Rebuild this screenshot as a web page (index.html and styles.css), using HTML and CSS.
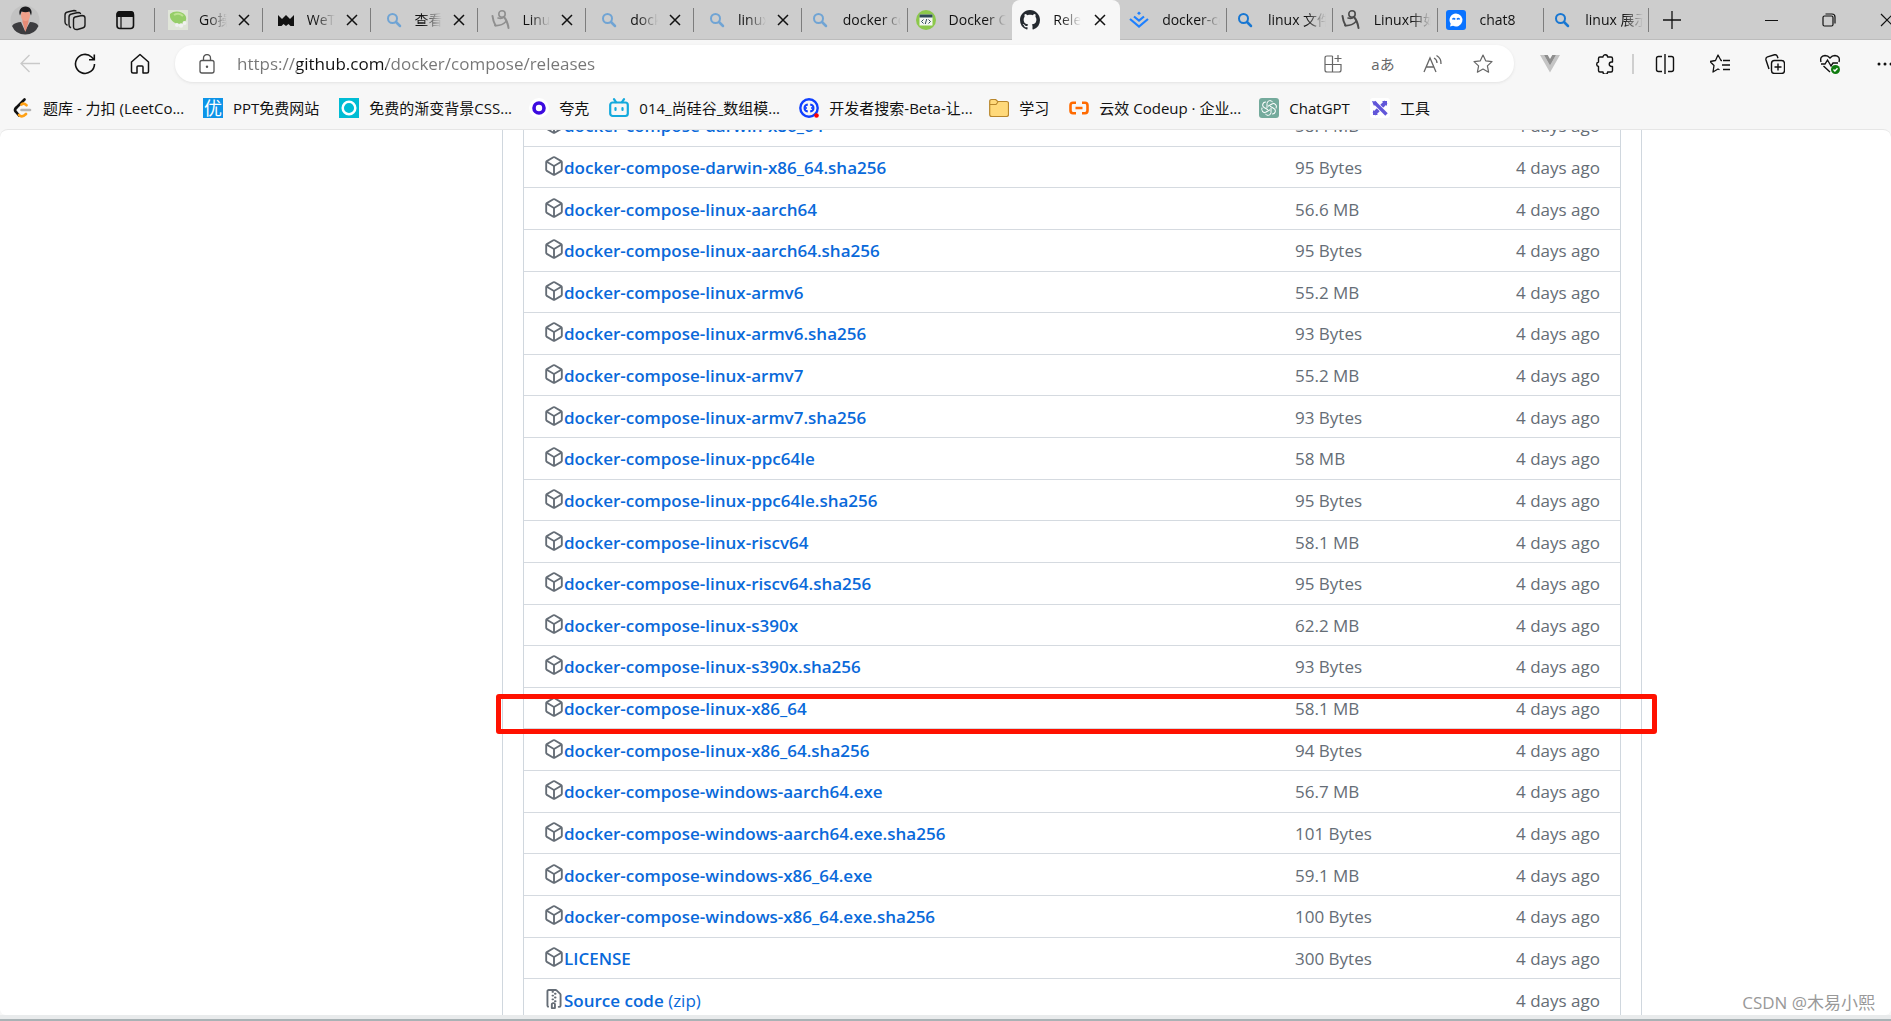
FILE: index.html
```html
<!DOCTYPE html>
<html lang="zh-CN">
<head>
<meta charset="utf-8">
<title>Releases · docker/compose</title>
<link rel="stylesheet" href="styles.css">
</head>
<body>
<svg class="defs" aria-hidden="true">
  <symbol id="package" viewBox="0 0 16 16"><path d="M8.878.392l5.25 3.045c.54.314.872.89.872 1.514v6.098a1.75 1.75 0 0 1-.872 1.514l-5.25 3.045a1.75 1.75 0 0 1-1.756 0l-5.25-3.045A1.75 1.75 0 0 1 1 11.049V4.951c0-.624.332-1.201.872-1.514L7.122.392a1.75 1.75 0 0 1 1.756 0ZM7.875 1.69l-4.63 2.685L8 7.133l4.755-2.758-4.63-2.685a.248.248 0 0 0-.25 0ZM2.5 5.677v5.372c0 .09.047.171.125.216l4.625 2.683V8.432Zm6.25 8.271 4.625-2.683a.25.25 0 0 0 .125-.216V5.677L8.75 8.432Z"/></symbol>
  <symbol id="zip" viewBox="0 0 16 16"><path d="M3.5 1.75v11.5c0 .09.048.173.126.217a.75.75 0 0 1-.752 1.298A1.748 1.748 0 0 1 2 13.25V1.75C2 .784 2.784 0 3.75 0h5.586c.464 0 .909.185 1.237.513l2.914 2.914c.329.328.513.773.513 1.237v8.586A1.75 1.75 0 0 1 12.25 15h-.5a.75.75 0 0 1 0-1.5h.5a.25.25 0 0 0 .25-.25V4.664a.25.25 0 0 0-.073-.177L9.513 1.573a.25.25 0 0 0-.177-.073H7.25a.75.75 0 0 1 0 1.5h-.5a.75.75 0 0 1 0-1.5h-3a.25.25 0 0 0-.25.25Zm3.75 8.75h.5c.966 0 1.75.784 1.75 1.75v3a.75.75 0 0 1-.75.75h-2.5a.75.75 0 0 1-.75-.75v-3c0-.966.784-1.75 1.75-1.75ZM6 5.25a.75.75 0 0 1 .75-.75h.5a.75.75 0 0 1 0 1.5h-.5A.75.75 0 0 1 6 5.25Zm.75 2.25h.5a.75.75 0 0 1 0 1.5h-.5a.75.75 0 0 1 0-1.5ZM8 6.75A.75.75 0 0 1 8.75 6h.5a.75.75 0 0 1 0 1.5h-.5A.75.75 0 0 1 8 6.75ZM8.75 3h.5a.75.75 0 0 1 0 1.5h-.5a.75.75 0 0 1 0-1.5ZM8 9.75A.75.75 0 0 1 8.75 9h.5a.75.75 0 0 1 0 1.5h-.5A.75.75 0 0 1 8 9.75Zm-1 2.5v2.25h1v-2.25a.25.25 0 0 0-.25-.25h-.5a.25.25 0 0 0-.25.25Z"/></symbol>
  <symbol id="close" viewBox="0 0 12 12"><path d="M1 1l10 10M11 1L1 11" fill="none" stroke="#111" stroke-width="1.5"/></symbol>
  <symbol id="search" viewBox="0 0 20 20"><circle cx="8.500" cy="8.500" r="4.500" fill="none" stroke="currentColor" stroke-width="2"/><path d="M12 12l4 4" stroke="currentColor" stroke-width="2.500" stroke-linecap="round"/></symbol>
  <symbol id="scribble" viewBox="0 0 20 20"><g fill="none" stroke="currentColor" stroke-linecap="round"><circle cx="11" cy="4" r="3.200" stroke-width="1.600"/><path d="M1.500 6c.5 4 1.500 7 3 9.500M13 7c2.500 3 4 7 4.500 11" stroke-width="2"/><path d="M4 15.500c5 .5 9-2 11-4M7 8q4 1 6-1" stroke-width="1.600"/></g></symbol>
</svg>

<header class="browser">
  <div class="tabstrip">
    <div class="tab-tools">
      <button class="tool" aria-label="Profile"><svg class="avatar" viewBox="0 0 30 30"><circle cx="15" cy="15" r="14.500" fill="#c2c2c2"/><path d="M2 21c2-3 6-4 9-4l4 9 5-9c4 0 7 1 8.500 4a14.500 14.500 0 0 1-26.500 0z" fill="#3c3c3f"/><path d="M12.500 14h6v3l-3 10-3-10z" fill="#e58a75"/><ellipse cx="15.500" cy="10.500" rx="4.500" ry="5.500" fill="#f0a08a"/><path d="M10 10.500c-2-5 1-9 5.500-9s7.500 4 5.500 9l-1.500-4c-3 1-5 1-8 0z" fill="#1c1c1f"/></svg></button>
      <button class="tool" aria-label="Workspaces"><svg class="icon22" viewBox="0 0 22 22" fill="none" stroke="#1a1a1a" stroke-width="1.400" stroke-linecap="round"><path d="M11 8l7-1.500q3 0 3 2.500v7q0 2.500-2.500 3l-5 1.500q-4 .5-4-3v-7q0-2 1.500-2.500z"/><path d="M6.500 18.500Q5 18 5 15.500V8q0-2.500 2.500-3l6.500-1.500q2 0 2.500 1M3 16q-2-.5-2-3V6q0-2.500 2.500-3L10 1.500q1.500 0 2 .5"/></svg></button>
      <button class="tool" aria-label="Tab actions"><svg class="icon20" viewBox="0 0 20 20"><rect x="2" y="2" width="16.500" height="16.500" rx="3" fill="none" stroke="#111" stroke-width="1.600"/><path d="M1.500 7V4q0-3 3-3h11.500q3 0 3 3v3z" fill="#111"/><path d="M6 7v11" stroke="#111" stroke-width="1.200"/></svg></button>
    </div>
    <div class="tabs" role="tablist">
      <div class="tab closable" role="tab"><svg class="icon20 faded" viewBox="0 0 20 20"><rect width="20" height="20" fill="#e9f0df"/><path d="M2 4c4-4 12-3 15 1 3 4 0 9-4 9-6 1-12-4-11-10z" fill="#7fcf3e"/><path d="M6 5q5-3 9 1" stroke="#b9ec7a" stroke-width="2" fill="none"/><circle cx="9" cy="15" r="2" fill="#fff"/><circle cx="13" cy="15.500" r="2.200" fill="#fff"/><circle cx="16.500" cy="13" r="2" fill="#fff"/></svg><span class="title">Go操作</span><button class="close" aria-label="Close"><svg class="icon12"><use href="#close"/></svg></button></div>
      <div class="tab closable" role="tab"><svg class="icon20" viewBox="0 0 20 20"><path d="M2 5l4 4 4-4 4 4 4-4v11H14.500L12.500 14 10 16 7.500 14 5.500 16H2z" fill="#111"/></svg><span class="title">WeTab</span><button class="close" aria-label="Close"><svg class="icon12"><use href="#close"/></svg></button></div>
      <div class="tab closable" role="tab"><svg class="icon20 bing-faded"><use href="#search"/></svg><span class="title">查看端口</span><button class="close" aria-label="Close"><svg class="icon12"><use href="#close"/></svg></button></div>
      <div class="tab closable" role="tab"><svg class="icon20 ink-faded"><use href="#scribble"/></svg><span class="title">Linux</span><button class="close" aria-label="Close"><svg class="icon12"><use href="#close"/></svg></button></div>
      <div class="tab closable" role="tab"><svg class="icon20 bing-faded"><use href="#search"/></svg><span class="title">docker</span><button class="close" aria-label="Close"><svg class="icon12"><use href="#close"/></svg></button></div>
      <div class="tab closable" role="tab"><svg class="icon20 bing-faded"><use href="#search"/></svg><span class="title">linux 命令</span><button class="close" aria-label="Close"><svg class="icon12"><use href="#close"/></svg></button></div>
      <div class="tab" role="tab"><svg class="icon20 bing-faded"><use href="#search"/></svg><span class="title">docker co</span></div>
      <div class="tab" role="tab"><svg class="icon20" viewBox="0 0 20 20"><circle cx="10" cy="10" r="10" fill="#8cc84b"/><rect x="3.500" y="4.500" width="13" height="11" fill="#f4f6f2"/><path d="M3.500 4.500h13v3h-13z" fill="#2f4a58"/><path d="M7.500 9.500l-2 2 2 2M12.500 9.500l2 2-2 2M10.700 9l-1.400 5" fill="none" stroke="#2f4a58"/></svg><span class="title">Docker C</span></div>
      <div class="tab active" role="tab" aria-selected="true"><svg class="icon20" viewBox="0 0 16 16"><path fill="#24292f" d="M8 0c4.420 0 8 3.580 8 8a8.013 8.013 0 0 1-5.450 7.590c-.4.080-.55-.17-.55-.38 0-.27.010-1.130.010-2.200 0-.75-.25-1.230-.54-1.480 1.780-.2 3.650-.88 3.650-3.950 0-.88-.31-1.590-.82-2.150.080-.2.360-1.020-.080-2.120 0 0-.67-.22-2.200.820-.64-.18-1.320-.27-2-.27-.68 0-1.360.090-2 .27-1.530-1.030-2.200-.82-2.200-.82-.44 1.100-.16 1.920-.080 2.120-.51.560-.82 1.280-.82 2.150 0 3.060 1.860 3.750 3.640 3.950-.23.200-.44.550-.51 1.070-.46.210-1.610.550-2.330-.66-.15-.24-.6-.83-1.230-.82-.67.010-.27.380.010.530.340.190.730.900.820 1.130.160.450.680 1.310 2.690.940 0 .670.010 1.300.010 1.490 0 .210-.15.450-.55.380A7.995 7.995 0 0 1 0 8c0-4.420 3.580-8 8-8Z"/></svg><span class="title">Releases</span><button class="close" aria-label="Close"><svg class="icon12"><use href="#close"/></svg></button></div>
      <div class="tab" role="tab"><svg class="icon20" viewBox="0 0 20 20" fill="none" stroke="#1e80ff" stroke-width="2.200"><path d="M10 1.500l2 1.700-2 1.700-2-1.700z" fill="#1e80ff" stroke="none"/><path d="M5 6.500l5 4 5-4M1 9l9 7.500L19 9"/></svg><span class="title">docker-co</span></div>
      <div class="tab" role="tab"><svg class="icon20 bing"><use href="#search"/></svg><span class="title">linux 文件</span></div>
      <div class="tab" role="tab"><svg class="icon20 ink"><use href="#scribble"/></svg><span class="title">Linux中如</span></div>
      <div class="tab" role="tab"><svg class="icon20" viewBox="0 0 20 20"><rect width="20" height="20" rx="3" fill="#0a73ff"/><path d="M10 3.500a6.500 6.500 0 1 1-3 12.300L4 16.500l.700-2.800A6.500 6.500 0 0 1 10 3.500z" fill="#fff"/><path d="M6.500 9.500q1.300-2 2.600 0M11 9.500q1.300-2 2.600 0" stroke="#0a73ff" stroke-width="1.500" fill="none"/></svg><span class="title">chat8</span></div>
      <div class="tab" role="tab"><svg class="icon20 bing"><use href="#search"/></svg><span class="title">linux 展示</span></div>
    </div>
    <button class="newtab" aria-label="New tab"><svg class="icon20" viewBox="0 0 20 20" stroke="#111" stroke-width="1.300"><path d="M10 1v18M1 10h18"/></svg></button>
    <div class="window-controls">
      <button class="win" aria-label="Minimize"><svg class="icon14" viewBox="0 0 14 14" stroke="#111"><path d="M1 7.500h13"/></svg></button>
      <button class="win" aria-label="Restore"><svg class="icon14" viewBox="0 0 14 14" fill="none" stroke="#111" stroke-width="1.200"><rect x="1" y="3" width="10" height="10" rx="1.500"/><path d="M3.500 1h6.500q3 0 3 3v6.500"/></svg></button>
      <button class="win" aria-label="Close window"><svg class="icon14" viewBox="0 0 14 14" stroke="#111" stroke-width="1.200"><path d="M1 1l12 12M13 1L1 13"/></svg></button>
    </div>
  </div>

  <div class="toolbar">
    <button class="nav" aria-label="Back"><svg class="icon20" viewBox="0 0 20 20" fill="none" stroke="#c9c9c9" stroke-width="1.300"><path d="M20 9.500H1M9.500 1L1 9.500l8.500 8.500"/></svg></button>
    <button class="nav" aria-label="Refresh"><svg class="icon22" viewBox="0 0 22 22" fill="none" stroke="#111" stroke-width="1.600"><path d="M20.500 11a9.500 9.500 0 1 1-3-7l2.500 2.500M20.300 1.500v5.300h-5.300"/></svg></button>
    <button class="nav" aria-label="Home"><svg class="icon22" viewBox="0 0 22 22" fill="none" stroke="#111" stroke-width="1.500" stroke-linejoin="round"><path d="M2.500 9L11 1.500 19.500 9v9.500q0 1.500-1.500 1.500h-4v-6q0-1-1-1H9q-1 0-1 1v6H4q-1.500 0-1.500-1.500z"/></svg></button>
    <div class="address">
      <svg class="icon20" viewBox="0 0 20 20" fill="none" stroke="#555" stroke-width="1.300"><rect x="3" y="6.500" width="14" height="12.500" rx="2"/><path d="M6.500 6.500V4a3.500 3.500 0 0 1 7 0v2.500"/><circle cx="10" cy="12.800" r="1.200" fill="#555" stroke="none"/></svg>
      <input class="url" type="text" aria-label="Address" value="https://github.com/docker/compose/releases">
      <button class="page-action" aria-label="App available"><svg class="icon20" viewBox="0 0 20 20" fill="none" stroke="#666" stroke-width="1.200"><path d="M9.500 2H4Q2 2 2 4v12q0 2 2 2h12q2 0 2-2v-5.500H2M9.500 2v16M15 1v7M11.500 4.500h7"/></svg></button>
      <button class="page-action translate" aria-label="Translate">aあ</button>
      <button class="page-action" aria-label="Read aloud"><svg class="icon20" viewBox="0 0 20 20" fill="none" stroke="#666" stroke-width="1.300"><path d="M1 18L7 4l6 14M3 13h8M11 4q3 1.500 3 5M13.500 1.500q5 3 4.500 8.500"/></svg></button>
      <button class="page-action" aria-label="Favorite"><svg class="icon20" viewBox="0 0 20 20" fill="none" stroke="#666" stroke-width="1.200" stroke-linejoin="round"><path d="M10 1l2.700 5.800 6.300.8-4.600 4.300 1.200 6.300L10 15.100l-5.600 3.100 1.200-6.300L1 7.600l6.300-.8z"/></svg></button>
    </div>
    <div class="extensions">
      <button class="nav" aria-label="Vue devtools"><svg class="icon20" viewBox="0 0 20 20"><path d="M0 1h4l6 10.500L16 1h4L10 18.500z" fill="#c4c4c4"/><path d="M4 1h3.700L10 5l2.300-4H16l-6 10.500z" fill="#8e8e8e"/></svg></button>
      <button class="nav" aria-label="Extensions"><svg class="icon20" viewBox="0 0 20 20" fill="none" stroke="#111" stroke-width="1.400" stroke-linejoin="round"><path d="M5 3h3a2.300 2.300 0 0 1 4.600 0H16q1.500 0 1.500 1.500V8h-1a2.200 2.200 0 0 0 0 4.500h1v4q0 1.500-1.500 1.500h-3.400a2.300 2.300 0 0 1-4.600 0H5q-1.500 0-1.500-1.500v-4a2.300 2.300 0 0 1 0-4.500V4.500Q3.500 3 5 3z"/></svg></button>
    </div>
    <button class="nav" aria-label="Split screen"><svg class="icon20" viewBox="0 0 20 20" fill="none" stroke="#111" stroke-width="1.400"><path d="M7 2.500H3.500q-2 0-2 2v11q0 2 2 2H7M13 2.500h3.500q2 0 2 2v11q0 2-2 2H13M10 0v20"/></svg></button>
    <button class="nav" aria-label="Favorites"><svg class="icon20" viewBox="0 0 20 20" fill="none" stroke="#111" stroke-width="1.300" stroke-linejoin="round"><path d="M12 6.500h-1L8 1 5.500 6.500 0 7.500l4 4-1 6.500 5-3 1.500.8M13 6.500h7M12 11h8M13 15.500h7"/></svg></button>
    <button class="nav" aria-label="Collections"><svg class="icon20" viewBox="0 0 20 20" fill="none" stroke="#111" stroke-width="1.400"><rect x="6.500" y="6.500" width="13" height="13" rx="3"/><path d="M13 9.500v7M9.500 13h7M4 15L1 6Q.500 3.500 2.500 2.800l7-2q2-.5 2.800 1.500l.7 2"/></svg></button>
    <button class="nav" aria-label="Browser essentials"><svg class="icon20" viewBox="0 0 20 20" fill="none" stroke="#111" stroke-width="1.400"><path d="M1 8Q-.500 2 5 1.500q3 0 5 2.500 2-2.500 5-2.500Q20.500 2 19 8M1 10h4l2.500-4 3.500 6 2-3h5M3.500 12l6.500 6"/><circle cx="15.500" cy="15.500" r="4.500" fill="#107c10" stroke="none"/><path d="M13.500 15.500l1.400 1.400 2.600-2.700" stroke="#fff"/></svg></button>
    <button class="nav" aria-label="More"><svg class="icon20" viewBox="0 0 20 20" fill="#111"><circle cx="4" cy="10" r="1.500"/><circle cx="10" cy="10" r="1.500"/><circle cx="16" cy="10" r="1.500"/></svg></button>
  </div>

  <nav class="bookmarks">
    <a class="bookmark" href="#"><svg class="icon20" viewBox="0 0 20 20" fill="none" stroke-width="2.600" stroke-linecap="round"><path d="M11.500 1.500L3 10" stroke="#111"/><path d="M3 10q-2 2 0 4l3 3.500" stroke="#111"/><path d="M6 17q3 3 7-1M8.500 6.500q2-2 5 .8" stroke="#ffa116"/><path d="M8.500 12H17" stroke="#b3b3b3"/></svg><span class="label long">题库 - 力扣 (LeetCo...</span></a>
    <a class="bookmark" href="#"><span class="badge">优</span><span class="label">PPT免费网站</span></a>
    <a class="bookmark" href="#"><svg class="icon20" viewBox="0 0 20 20"><rect width="20" height="20" fill="#00bcd4"/><circle cx="10" cy="10" r="6.300" fill="none" stroke="#fff" stroke-width="2.500"/></svg><span class="label long">免费的渐变背景CSS...</span></a>
    <a class="bookmark" href="#"><svg class="icon20" viewBox="0 0 20 20"><circle cx="10" cy="10" r="10" fill="#fff"/><circle cx="10" cy="10" r="5" fill="none" stroke="#3d0be0" stroke-width="3.600"/></svg><span class="label">夸克</span></a>
    <a class="bookmark" href="#"><svg class="icon20" viewBox="0 0 20 20" fill="none" stroke="#13a9dd" stroke-width="2.200" stroke-linecap="round"><rect x="1.200" y="4.500" width="17.600" height="13.500" rx="2.500"/><path d="M5 1.200l2 3M15 1.200l-2 3M6.500 10v2M13.500 10v2"/></svg><span class="label long">014_尚硅谷_数组模...</span></a>
    <a class="bookmark" href="#"><svg class="icon20" viewBox="0 0 20 20" fill="none" stroke="#1040ff"><circle cx="10" cy="10" r="8.700" stroke-width="2.400"/><path d="M8.800 6.500Q5.500 7 5.500 10t3.300 3.500M11.200 6.500q3.300.5 3.300 3.500t-3.300 3.500" stroke-width="2"/><path d="M6 10h2M12 10h2" stroke-width="1.500"/><circle cx="17.500" cy="17.500" r="2.300" fill="#f00" stroke="none"/></svg><span class="label long">开发者搜索-Beta-让...</span></a>
    <a class="bookmark" href="#"><svg class="icon20" viewBox="0 0 20 20"><path d="M.700 3.500q0-2 2-2h4l2 2h9q1.800 0 1.800 1.800v11.200q0 2-2 2H2.700q-2 0-2-2z" fill="#ffd97a" stroke="#b8862b" stroke-width="1.200"/><path d="M1 6.500h6l2-2.500" fill="none" stroke="#b8862b" stroke-width="1.200"/></svg><span class="label">学习</span></a>
    <a class="bookmark" href="#"><svg class="icon20" viewBox="0 0 20 20" fill="none" stroke="#ff6a00" stroke-width="2.600"><path d="M7 4.800H4Q1.500 4.800 1.500 7.500v5Q1.500 15.200 4 15.200h3M13 4.800h3q2.500 0 2.500 2.700v5q0 2.700-2.500 2.700h-3M6.500 10h7"/></svg><span class="label long">云效 Codeup · 企业...</span></a>
    <a class="bookmark" href="#"><svg class="icon20" viewBox="0 0 20 20"><rect width="20" height="20" rx="3" fill="#74aa9c"/><g fill="none" stroke="#fff" stroke-width="1"><path d="M8 10V5.500a3 3 0 0 1 5.700-1.200"/><path d="M8 10V5.500a3 3 0 0 1 5.700-1.200" transform="rotate(60 10 10)"/><path d="M8 10V5.500a3 3 0 0 1 5.700-1.200" transform="rotate(120 10 10)"/><path d="M8 10V5.500a3 3 0 0 1 5.700-1.200" transform="rotate(180 10 10)"/><path d="M8 10V5.500a3 3 0 0 1 5.700-1.200" transform="rotate(240 10 10)"/><path d="M8 10V5.500a3 3 0 0 1 5.700-1.200" transform="rotate(300 10 10)"/></g></svg><span class="label">ChatGPT</span></a>
    <a class="bookmark" href="#"><svg class="icon20" viewBox="0 0 20 20"><rect width="20" height="20" rx="3" fill="#fff"/><path d="M4 16L16 4" stroke="#6257d9" stroke-width="4"/><path d="M4.500 4.500l11 11" stroke="#fff" stroke-width="5"/><path d="M4 4l12.500 12.500" stroke="#6257d9" stroke-width="3.400"/><path d="M12 3h5v5zM3 12v5h5zM2 3l5 1-3 4z" fill="#6257d9"/></svg><span class="label">工具</span></a>
  </nav>
</header>

<main class="viewport">
  <section class="release">
    <table class="assets">
      <tbody>
        <tr><td class="name"><svg class="icon20"><use href="#package"/></svg><a href="#">docker-compose-darwin-x86_64</a></td><td class="size">58.4 MB</td><td class="date">4 days ago</td></tr>
        <tr><td class="name"><svg class="icon20"><use href="#package"/></svg><a href="#">docker-compose-darwin-x86_64.sha256</a></td><td class="size">95 Bytes</td><td class="date">4 days ago</td></tr>
        <tr><td class="name"><svg class="icon20"><use href="#package"/></svg><a href="#">docker-compose-linux-aarch64</a></td><td class="size">56.6 MB</td><td class="date">4 days ago</td></tr>
        <tr><td class="name"><svg class="icon20"><use href="#package"/></svg><a href="#">docker-compose-linux-aarch64.sha256</a></td><td class="size">95 Bytes</td><td class="date">4 days ago</td></tr>
        <tr><td class="name"><svg class="icon20"><use href="#package"/></svg><a href="#">docker-compose-linux-armv6</a></td><td class="size">55.2 MB</td><td class="date">4 days ago</td></tr>
        <tr><td class="name"><svg class="icon20"><use href="#package"/></svg><a href="#">docker-compose-linux-armv6.sha256</a></td><td class="size">93 Bytes</td><td class="date">4 days ago</td></tr>
        <tr><td class="name"><svg class="icon20"><use href="#package"/></svg><a href="#">docker-compose-linux-armv7</a></td><td class="size">55.2 MB</td><td class="date">4 days ago</td></tr>
        <tr><td class="name"><svg class="icon20"><use href="#package"/></svg><a href="#">docker-compose-linux-armv7.sha256</a></td><td class="size">93 Bytes</td><td class="date">4 days ago</td></tr>
        <tr><td class="name"><svg class="icon20"><use href="#package"/></svg><a href="#">docker-compose-linux-ppc64le</a></td><td class="size">58 MB</td><td class="date">4 days ago</td></tr>
        <tr><td class="name"><svg class="icon20"><use href="#package"/></svg><a href="#">docker-compose-linux-ppc64le.sha256</a></td><td class="size">95 Bytes</td><td class="date">4 days ago</td></tr>
        <tr><td class="name"><svg class="icon20"><use href="#package"/></svg><a href="#">docker-compose-linux-riscv64</a></td><td class="size">58.1 MB</td><td class="date">4 days ago</td></tr>
        <tr><td class="name"><svg class="icon20"><use href="#package"/></svg><a href="#">docker-compose-linux-riscv64.sha256</a></td><td class="size">95 Bytes</td><td class="date">4 days ago</td></tr>
        <tr><td class="name"><svg class="icon20"><use href="#package"/></svg><a href="#">docker-compose-linux-s390x</a></td><td class="size">62.2 MB</td><td class="date">4 days ago</td></tr>
        <tr><td class="name"><svg class="icon20"><use href="#package"/></svg><a href="#">docker-compose-linux-s390x.sha256</a></td><td class="size">93 Bytes</td><td class="date">4 days ago</td></tr>
        <tr class="marked"><td class="name"><svg class="icon20"><use href="#package"/></svg><a href="#">docker-compose-linux-x86_64</a></td><td class="size">58.1 MB</td><td class="date">4 days ago</td></tr>
        <tr><td class="name"><svg class="icon20"><use href="#package"/></svg><a href="#">docker-compose-linux-x86_64.sha256</a></td><td class="size">94 Bytes</td><td class="date">4 days ago</td></tr>
        <tr><td class="name"><svg class="icon20"><use href="#package"/></svg><a href="#">docker-compose-windows-aarch64.exe</a></td><td class="size">56.7 MB</td><td class="date">4 days ago</td></tr>
        <tr><td class="name"><svg class="icon20"><use href="#package"/></svg><a href="#">docker-compose-windows-aarch64.exe.sha256</a></td><td class="size">101 Bytes</td><td class="date">4 days ago</td></tr>
        <tr><td class="name"><svg class="icon20"><use href="#package"/></svg><a href="#">docker-compose-windows-x86_64.exe</a></td><td class="size">59.1 MB</td><td class="date">4 days ago</td></tr>
        <tr><td class="name"><svg class="icon20"><use href="#package"/></svg><a href="#">docker-compose-windows-x86_64.exe.sha256</a></td><td class="size">100 Bytes</td><td class="date">4 days ago</td></tr>
        <tr><td class="name"><svg class="icon20"><use href="#package"/></svg><a href="#">LICENSE</a></td><td class="size">300 Bytes</td><td class="date">4 days ago</td></tr>
        <tr><td class="name"><svg class="icon20"><use href="#zip"/></svg><a href="#">Source code <span class="format">(zip)</span></a></td><td class="size"></td><td class="date">4 days ago</td></tr>
      </tbody>
    </table>
  </section>
  <div class="watermark">CSDN @木易小熙</div>
</main>
<footer class="frame"></footer>
</body>
</html>
```
FILE: styles.css
```css
* { box-sizing: border-box; }

body {
  margin: 0;
  height: 100vh;
  display: flex;
  flex-direction: column;
  overflow: hidden;
  background: #f7f7f7;
  color: #111;
  font-family: "Open Sans", "Noto Sans CJK SC", sans-serif;
  font-size: 14px;
}

button {
  border: 0;
  padding: 0;
  background: none;
  font: inherit;
  display: flex;
  align-items: center;
  justify-content: center;
  flex: none;
}

a { color: inherit; text-decoration: none; }
svg { flex: none; display: block; }
.defs { position: absolute; width: 0; height: 0; }
.icon12 { width: 12px; height: 12px; }
.icon14 { width: 14px; height: 14px; }
.icon20 { width: 20px; height: 20px; }
.icon22 { width: 22px; height: 22px; }
.avatar { width: 30px; height: 30px; }

/* Tab strip */
.tabstrip {
  display: flex;
  height: 40px;
  margin-right: -25px;
  background: #cdcdcd;
  border-bottom: 1px solid #bcbcbc;
}
.tab-tools { display: flex; width: 154px; flex: none; }
.tool { width: 50px; }
.tabs { display: flex; flex: 1; min-width: 0; }
.tab {
  flex: 1 1 106px;
  min-width: 0;
  display: flex;
  align-items: center;
  gap: 13px;
  padding: 0 6px 0 9px;
  background: linear-gradient(#7d7d7d, #7d7d7d) left center / 1px 24px no-repeat;
}
.tab:last-child {
  background:
    linear-gradient(#7d7d7d, #7d7d7d) left center / 1px 24px no-repeat,
    linear-gradient(#7d7d7d, #7d7d7d) right center / 1px 24px no-repeat;
}
.tab.closable { flex-basis: 108px; padding: 0 12px 0 14px; gap: 11px; }
.tab.active {
  flex-basis: 108px;
  height: 40px;
  background: #f7f7f7;
  border-radius: 8px 8px 0 0;
  padding: 0 14px 0 8px;
}
.tab.active + .tab { background: none; }
.title {
  flex: 1;
  min-width: 0;
  overflow: hidden;
  white-space: nowrap;
  line-height: 24px;
  -webkit-mask-image: linear-gradient(to left, transparent, #000 20px);
  mask-image: linear-gradient(to left, transparent, #000 20px);
}
.faded { opacity: 0.7; }
.bing { color: #1877d2; }
.bing-faded { color: #70a4d4; }
.ink { color: #4c4c4c; }
.ink-faded { color: #8f8f8f; }
.newtab { width: 46px; }
.window-controls { display: flex; margin-left: 47px; }
.win { width: 58px; }

/* Toolbar */
.toolbar {
  display: flex;
  align-items: center;
  height: 47px;
  margin-right: -21px;
  padding-left: 2px;
}
.nav { width: 55px; height: 36px; }
.address {
  flex: 1;
  min-width: 0;
  height: 37px;
  margin: 0 8px;
  padding: 0 6px 0 22px;
  display: flex;
  align-items: center;
  background: #fff;
  border-radius: 18px;
  box-shadow: 0 1px 3px #e2e2e2;
}
.url {
  flex: 1;
  min-width: 0;
  margin-left: 20px;
  border: 0;
  padding: 0;
  outline: 0;
  font: 17px/24px "Open Sans", sans-serif;
  color: transparent;
  background: linear-gradient(to right, #767676 60px, #111 60px, #111 149px, #767676 149px);
  -webkit-background-clip: text;
  background-clip: text;
}
.page-action { width: 50px; height: 36px; color: #666; }
.translate { font-size: 15px; }
.extensions {
  display: flex;
  margin-right: 3px;
  border-right: 2px solid transparent;
  background: linear-gradient(#cfcfcf, #cfcfcf) right center / 2px 20px no-repeat border-box;
}

/* Bookmarks */
.bookmarks {
  display: flex;
  align-items: center;
  gap: 20px;
  height: 42px;
  padding: 0 0 1px 13px;
  font-size: 15px;
}
.bookmark { display: flex; align-items: center; gap: 10px; white-space: nowrap; line-height: 24px; }
.label.long { width: 140px; }
.badge {
  width: 20px;
  height: 20px;
  background: #0d94e8;
  color: #fff;
  font-size: 18px;
  line-height: 20px;
  text-align: center;
}

/* Page */
.viewport {
  position: relative;
  flex: 1;
  min-height: 0;
  overflow: hidden;
  padding: 0 249px 0 502px;
  background: #fff;
  border-top: 1px solid #e6e6e6;
  border-radius: 8px 8px 6px 6px;
}
.release { padding: 0 20px; border: solid #d0d7de; border-width: 0 1px; }
.assets {
  width: 100%;
  height: 916px;
  margin-top: -25px;
  border-collapse: separate;
  border-spacing: 0;
  border: solid #d0d7de;
  border-width: 0 1px;
  font-size: 17px;
  line-height: 24px;
}
.assets td { padding: 2px 0 0; border-bottom: 1px solid #d5dae0; vertical-align: middle; }
.assets .name { padding-left: 20px; font-weight: 600; color: #0969da; }
.name svg { display: inline-block; vertical-align: -2px; fill: #656d76; }
.format { font-weight: 400; }
.assets .size { width: 180px; color: #656d76; }
.assets .date { width: 145px; padding-right: 20px; color: #656d76; text-align: right; }
.marked { position: relative; }
.marked::after {
  content: "";
  position: absolute;
  inset: 6px -37px -5px -28px;
  border: 5px solid #ff1100;
  border-radius: 3px;
}
.watermark {
  position: absolute;
  right: 16px;
  bottom: 0;
  font-size: 17px;
  line-height: 24px;
  color: #999;
}
.frame { height: 6px; background: #e9ebec; border-bottom: 2px solid #a9b2b5; }
```
